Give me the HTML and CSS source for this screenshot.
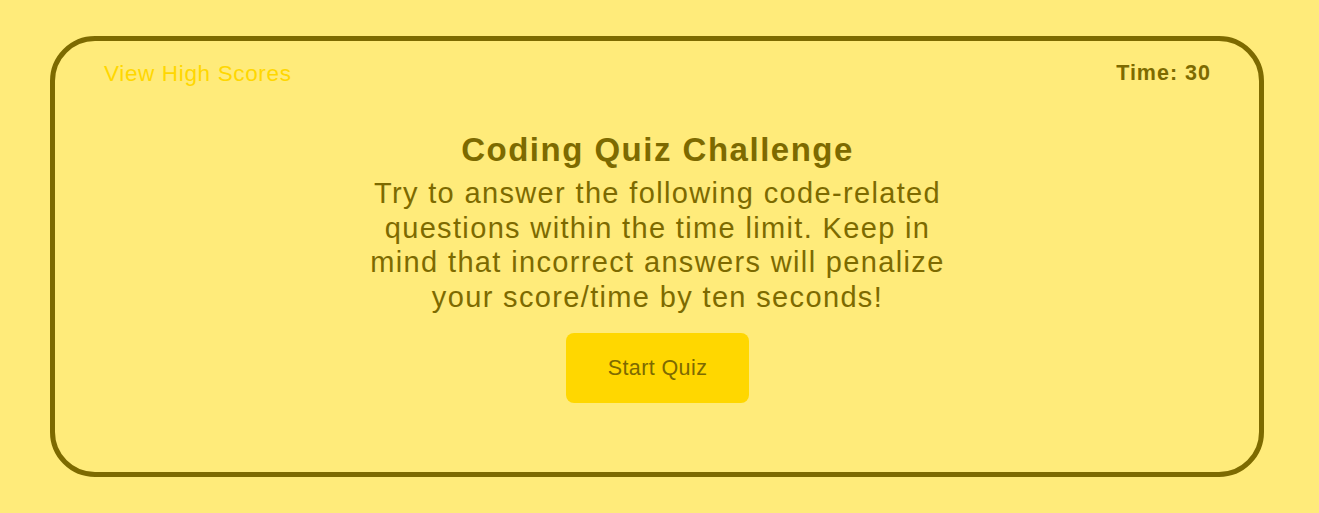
FILE: index.html
```html
<!DOCTYPE html>
<html lang="en">
<head>
<meta charset="utf-8">
<title>Coding Quiz</title>
<link rel="stylesheet" href="styles.css">
</head>
<body>
<main class="card">
  <header class="topbar">
    <a class="scores-link" href="#">View High Scores</a>
    <div class="timer">Time: 30</div>
  </header>
  <section class="intro">
    <h1 class="title">Coding Quiz Challenge</h1>
    <p class="desc">Try to answer the following code-related questions within the time limit. Keep in mind that incorrect answers will penalize your score/time by ten seconds!</p>
    <button class="start-btn" type="button">Start Quiz</button>
  </section>
</main>
</body>
</html>
```
FILE: styles.css
```css
html, body {
  margin: 0;
  padding: 0;
  background: #ffeb7a;
}
body {
  font-family: "Liberation Sans", Arial, sans-serif;
  color: #7d6a00;
  padding: 36px 55px 0 50px;
}
.card {
  border: 5px solid #7d6a00;
  border-radius: 45px;
  box-sizing: border-box;
  height: 441px;
  padding: 20px 48px 0 49px;
}
.topbar {
  display: flex;
  justify-content: space-between;
  align-items: center;
  height: 25px;
}
.scores-link {
  color: #ffd700;
  text-decoration: none;
  font-size: 22.5px;
  letter-spacing: 0.65px;
}
.timer {
  font-weight: bold;
  font-size: 21.5px;
  letter-spacing: 1px;
}
.intro {
  display: flex;
  flex-direction: column;
  align-items: center;
  margin-top: 45px;
}
.title {
  font-size: 33px;
  letter-spacing: 1.5px;
  margin: 0;
  line-height: 37px;
}
.desc {
  font-size: 29px;
  letter-spacing: 1.35px;
  line-height: 34.5px;
  width: 592px;
  text-align: center;
  margin: 8px 0 0 0;
}
.start-btn {
  margin-top: 19px;
  background: #ffd700;
  color: #7d6a00;
  border: none;
  border-radius: 8px;
  width: 183px;
  height: 70px;
  padding: 0;
  font-family: "Liberation Sans", Arial, sans-serif;
  font-size: 21.5px;
  letter-spacing: 0.4px;
}
```
